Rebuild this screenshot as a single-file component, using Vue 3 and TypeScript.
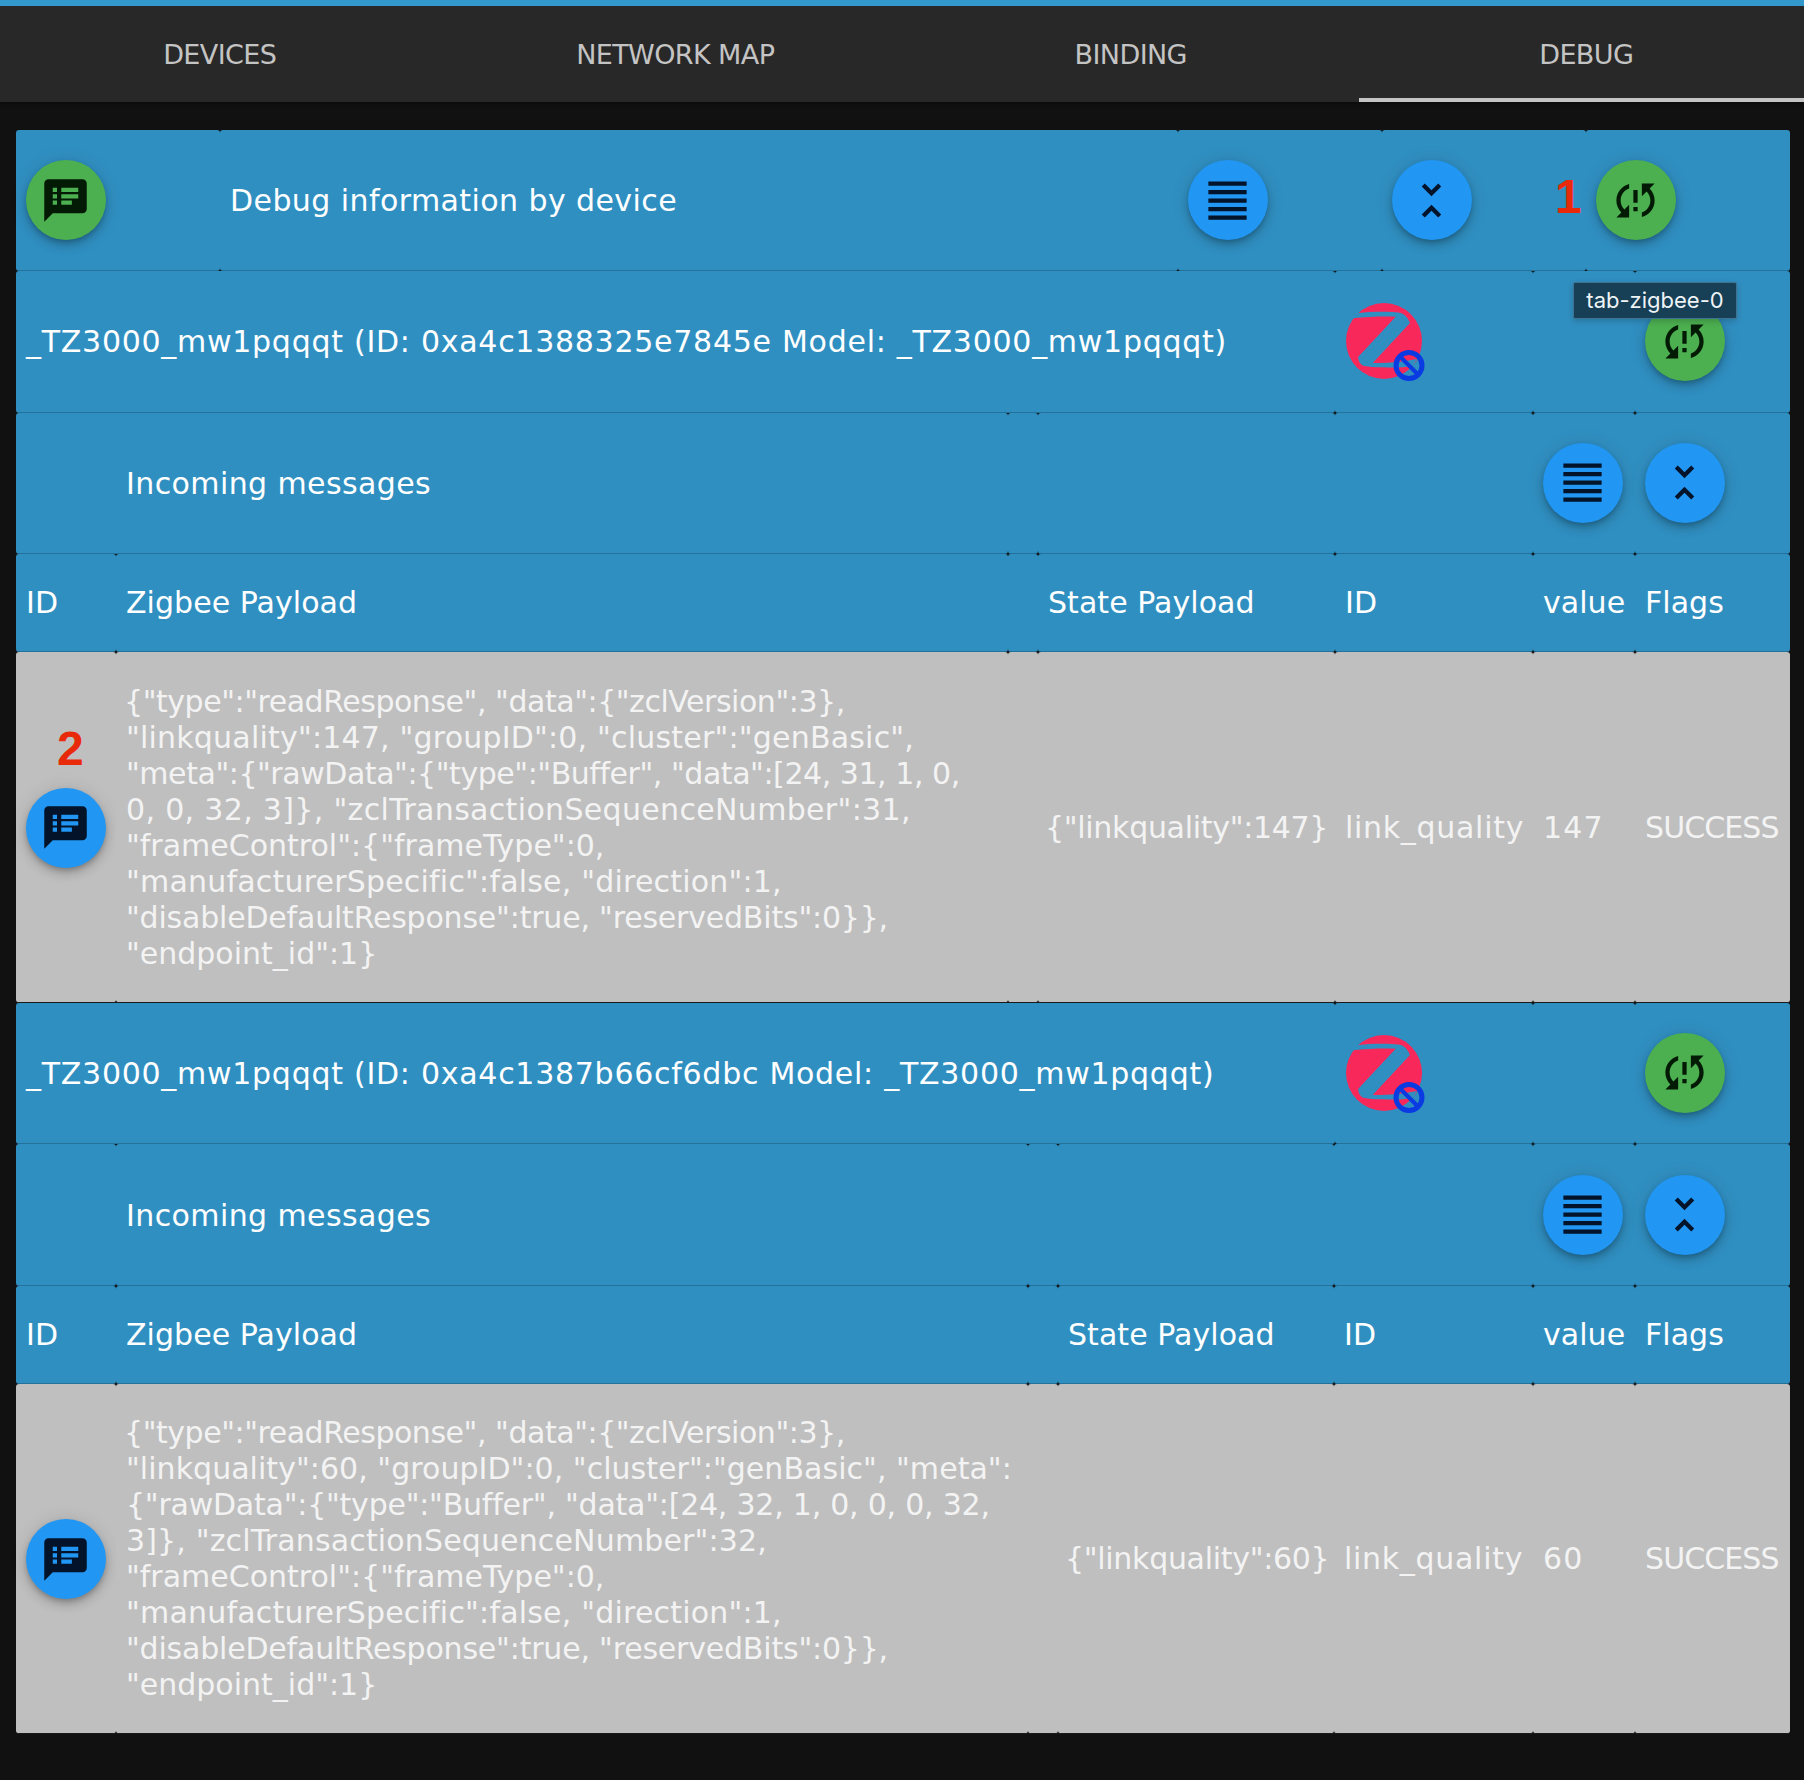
<script setup lang="ts">
interface Block {
  device: string
  cols: string
  splitTop: boolean
  payload: string[]
  state: string
  value: string
}
const tabs: string[] = ['Devices', 'Network map', 'Binding', 'Debug']
const icons = {
  notes: 'M20 2H4c-1.1 0-1.99.9-1.99 2L2 22l4-4h14c1.1 0 2-.9 2-2V4c0-1.1-.9-2-2-2zM8 14H6v-2h2v2zm0-3H6V9h2v2zm0-3H6V6h2v2zm7 6h-5v-2h5v2zm3-3h-8V9h8v2zm0-3h-8V6h8v2z',
  lines: 'M3 21h18v-2H3v2zm0-4h18v-2H3v2zm0-4h18v-2H3v2zm0-4h18V7H3v2zm0-6v2h18V3H3z',
  fold: 'M7.41 18.59L8.83 20 12 16.83 15.17 20l1.41-1.41L12 14l-4.59 4.59zm9.18-13.18L15.17 4 12 7.17 8.83 4 7.41 5.41 12 10l4.59-4.59z',
  sync: 'M3 12c0 2.21.91 4.2 2.36 5.64L3 20h6v-6l-2.24 2.24C5.68 15.15 5 13.66 5 12c0-2.61 1.67-4.83 4-5.65V4.26C5.55 5.15 3 8.27 3 12zm8 5h2v-2h-2v2zM21 4h-6v6l2.24-2.24C18.32 8.85 19 10.34 19 12c0 2.61-1.67 4.83-4 5.65v2.09c3.45-.89 6-4.01 6-7.74 0-2.21-.91-4.2-2.36-5.64L21 4zm-10 9h2V7h-2v6z'
}
const blocks: Block[] = [
  {
    device: '_TZ3000_mw1pqqqt (ID: 0xa4c1388325e7845e Model: _TZ3000_mw1pqqqt)',
    cols: 'cols-a', splitTop: false, state: '{"linkquality":147}', value: '147',
    payload: [
      '{"type":"readResponse", "data":{"zclVersion":3},',
      '"linkquality":147, "groupID":0, "cluster":"genBasic",',
      '"meta":{"rawData":{"type":"Buffer", "data":[24, 31, 1, 0,',
      '0, 0, 32, 3]}, "zclTransactionSequenceNumber":31,',
      '"frameControl":{"frameType":0,',
      '"manufacturerSpecific":false, "direction":1,',
      '"disableDefaultResponse":true, "reservedBits":0}},',
      '"endpoint_id":1}'
    ]
  },
  {
    device: '_TZ3000_mw1pqqqt (ID: 0xa4c1387b66cf6dbc Model: _TZ3000_mw1pqqqt)',
    cols: 'cols-b', splitTop: true, state: '{"linkquality":60}', value: '60',
    payload: [
      '{"type":"readResponse", "data":{"zclVersion":3},',
      '"linkquality":60, "groupID":0, "cluster":"genBasic", "meta":',
      '{"rawData":{"type":"Buffer", "data":[24, 32, 1, 0, 0, 0, 32,',
      '3]}, "zclTransactionSequenceNumber":32,',
      '"frameControl":{"frameType":0,',
      '"manufacturerSpecific":false, "direction":1,',
      '"disableDefaultResponse":true, "reservedBits":0}},',
      '"endpoint_id":1}'
    ]
  }
]
</script>

<template>
  <div class="page">
    <header class="top">
      <nav class="tabs">
        <div v-for="t in tabs" :key="t" class="tab" :class="{ active: t === 'Debug' }">{{ t }}</div>
      </nav>
    </header>

    <main class="content">
      <div class="row row-title">
        <div class="cell"><button class="fab green"><svg viewBox="0 0 24 24"><path :d="icons.notes" /></svg></button></div>
        <div class="cell txt">Debug information by device</div>
        <div class="cell"><button class="fab blue"><svg viewBox="0 0 24 24"><path :d="icons.lines" /></svg></button></div>
        <div class="cell"><button class="fab blue"><svg viewBox="0 0 24 24"><path :d="icons.fold" /></svg></button></div>
        <div class="cell"><button class="fab green"><svg viewBox="0 0 24 24"><path :d="icons.sync" /></svg></button></div>
      </div>

      <template v-for="b in blocks" :key="b.device">
        <div class="row row-device">
          <div class="cell txt">{{ b.device }}</div>
          <div class="cell">
            <svg class="zigbee" viewBox="0 0 76 76">
              <circle cx="38" cy="38" r="38" fill="#f9285a" />
              <path class="z" d="M6.7 15.3C8 13 9.5 11.5 11.3 10.3C24 8.6 42 8.4 54 9.7C59 11 62 15 64 20L26.7 60C40 60.5 56 59 70.7 56L67.3 62.7C58 64.5 47 65 37.3 64.3C29 64.3 23 63.8 17.3 62.7C13.5 61 12 57 12.3 53.7L49.7 13.7C35 13.4 20 13.9 6.7 15.3Z" />
              <circle class="ban" cx="63" cy="62.5" r="13" />
              <path class="ban" d="M54 53.5L72 71.5" />
            </svg>
          </div>
          <div class="cell"></div>
          <div class="cell"><button class="fab green"><svg viewBox="0 0 24 24"><path :d="icons.sync" /></svg></button></div>
        </div>

        <div class="row row-msg" :class="b.cols">
          <div v-if="b.splitTop" class="cell"></div>
          <div class="cell txt" :class="{ 'span-two': !b.splitTop }">Incoming messages</div>
          <div class="cell"></div>
          <div class="cell"></div>
          <div class="cell"></div>
          <div class="cell"><button class="fab blue"><svg viewBox="0 0 24 24"><path :d="icons.lines" /></svg></button></div>
          <div class="cell"><button class="fab blue"><svg viewBox="0 0 24 24"><path :d="icons.fold" /></svg></button></div>
        </div>

        <div class="row row-head" :class="b.cols">
          <div class="cell">ID</div>
          <div class="cell">Zigbee Payload</div>
          <div class="cell"></div>
          <div class="cell">State Payload</div>
          <div class="cell">ID</div>
          <div class="cell">value</div>
          <div class="cell">Flags</div>
        </div>

        <div class="row row-body" :class="b.cols">
          <div class="cell"><button class="fab blue"><svg viewBox="0 0 24 24"><path :d="icons.notes" /></svg></button></div>
          <div class="cell payload"><span v-for="(line, i) in b.payload" :key="i" class="line">{{ line }}</span></div>
          <div class="cell"></div>
          <div class="cell state">{{ b.state }}</div>
          <div class="cell attr">link_quality</div>
          <div class="cell val">{{ b.value }}</div>
          <div class="cell flag">SUCCESS</div>
        </div>
      </template>
    </main>

    <span class="mark mark-one">1</span>
    <span class="mark mark-two">2</span>
    <div class="tooltip">tab-zigbee-0</div>
  </div>
</template>

<style scoped>
.page {
  position: relative;
  min-height: 1780px;
  background: #111;
  font-family: "DejaVu Sans", sans-serif;
  overflow: hidden;
}
.top {
  border-top: 6px solid #3399cc;
  background: #282828;
  box-shadow: 0 2px 4px rgba(0, 0, 0, 0.4);
  overflow: hidden;
}
.tabs {
  display: grid;
  grid-template-columns: repeat(4, 455.5px);
  margin-left: -8px;
  height: 96px;
}
.tab {
  display: flex;
  align-items: center;
  justify-content: center;
  color: #c4c4c4;
  font-size: 27px;
  letter-spacing: -0.6px;
  text-transform: uppercase;
}
.tab.active {
  box-shadow: inset 0 -4px 0 #c4c4c4;
}
.content {
  padding: 28px 14px 0 16px;
}
.row {
  display: grid;
  color: #fff;
  font-size: 30px;
  line-height: 36px;
}
.cell {
  display: flex;
  align-items: center;
  box-sizing: border-box;
  min-width: 0;
  padding: 30.3px 10px;
  background: #308fc1;
  border-bottom: 1px solid #24719c;
  border-radius: 3px;
  white-space: nowrap;
}
.cell.txt { padding-top: 31.3px; padding-bottom: 29.3px; }
.row-title { grid-template-columns: 204px 958px 204px 204px 204px; letter-spacing: 0.42px; }
.row-title .cell { padding-top: 30px; padding-bottom: 30px; }
.row-title .cell.txt { padding-top: 31px; padding-bottom: 29px; }
.row-device { grid-template-columns: 1319px 198px 102px 155px; letter-spacing: 0.73px; }
.row-msg { letter-spacing: 0.4px; }
.cols-a { grid-template-columns: 100px 892px 30px 297px 198px 102px 155px; }
.cols-b { grid-template-columns: 100px 912px 30px 276px 199px 102px 155px; }
.span-two { grid-column: span 2; padding-left: 110px; }
.row-head { letter-spacing: 0.05px; }
.row-head .cell { padding-top: 31px; padding-bottom: 30px; }
.row-body .cell {
  background: #bfbfbf;
  color: #f3f3f3;
  border-bottom-color: #1a1a1a;
  padding-top: 31.5px;
  padding-bottom: 30px;
}
.row-body .payload { display: block; }
.line { display: block; }
.line:first-child { margin-left: -2px; }
.cols-a .line:nth-child(1), .cols-b .line:nth-child(1) { letter-spacing: -0.46px; }
.cols-a .line:nth-child(2) { letter-spacing: 0.2px; }
.cols-a .line:nth-child(3) { letter-spacing: -0.45px; }
.cols-a .line:nth-child(4) { letter-spacing: 0.33px; }
.cols-b .line:nth-child(2) { letter-spacing: 0.04px; }
.cols-b .line:nth-child(3) { letter-spacing: -0.23px; }
.cols-b .line:nth-child(4) { letter-spacing: 0.15px; }
.line:nth-child(5) { letter-spacing: 0; }
.line:nth-child(6) { letter-spacing: 0.2px; }
.line:nth-child(7) { letter-spacing: -0.2px; }
.line:nth-child(8) { letter-spacing: 0; }
.row-body .state { padding-left: 7px; letter-spacing: -0.3px; }
.attr { letter-spacing: 0.7px; }
.val { letter-spacing: 1.2px; }
.flag { letter-spacing: -0.9px; }
.fab {
  display: flex;
  align-items: center;
  justify-content: center;
  flex: none;
  width: 80px;
  height: 80px;
  padding: 0;
  border: 0;
  border-radius: 50%;
  box-shadow: 0 3px 5px -1px rgba(0, 0, 0, 0.2), 0 6px 10px 0 rgba(0, 0, 0, 0.14), 0 1px 18px 0 rgba(0, 0, 0, 0.12);
}
.fab svg {
  width: 51px;
  height: 51px;
  margin-left: -2px;
  fill: currentColor;
}
.green { background: #4caf50; color: #031b05; }
.blue { background: #2196f3; color: #02132a; }
.zigbee {
  width: 76px;
  height: 76px;
  flex: none;
  overflow: visible;
  margin: 0 0 0 1px;
}
.z { fill: #308fc1; }
.ban {
  fill: none;
  stroke: #0a3be2;
  stroke-width: 5;
}
path.ban { stroke-width: 4; }
.mark {
  position: absolute;
  color: #e82a0a;
  font-family: "Liberation Sans", sans-serif;
  font-weight: 700;
  font-size: 48px;
  line-height: 54px;
}
.mark-one { left: 1555px; top: 170px; }
.mark-two { left: 57px; top: 722px; }
.tooltip {
  position: absolute;
  left: 1573px;
  top: 282px;
  box-sizing: border-box;
  width: 164px;
  height: 37px;
  border: 1px solid #3f7391;
  border-radius: 2px;
  background: #173f55;
  color: #eef3f6;
  font-family: Inter, "Liberation Sans", sans-serif;
  font-size: 22px;
  line-height: 35px;
  text-align: center;
  box-shadow: 0 2px 6px rgba(0, 0, 0, 0.2);
}
</style>

<style>
html, body { background: #111; }
</style>
